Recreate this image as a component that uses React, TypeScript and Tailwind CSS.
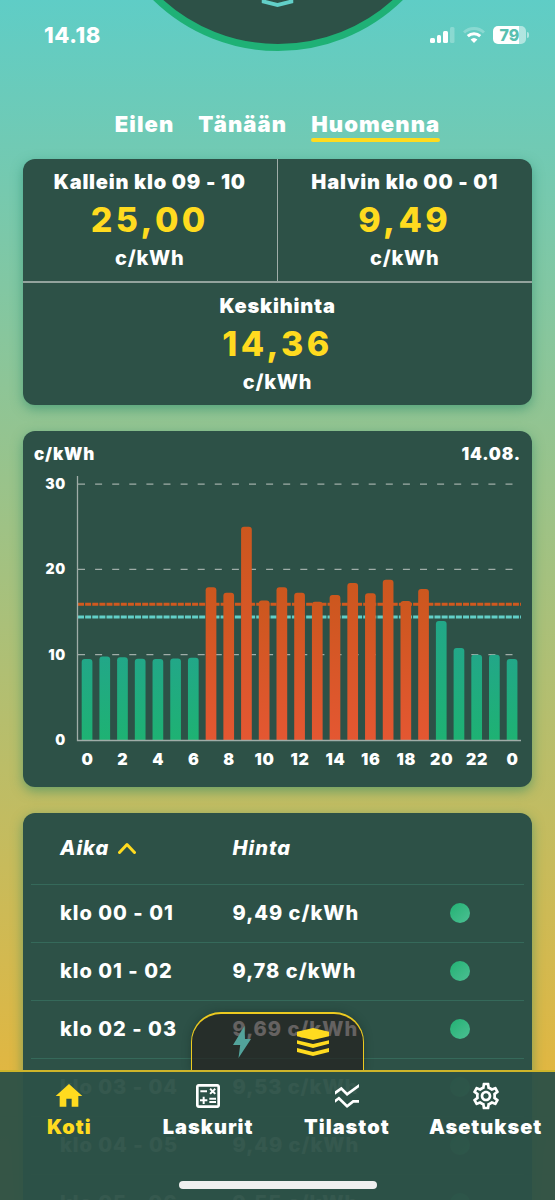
import React, { useState } from "react";
import { MdHome, MdOutlineCalculate, MdOutlineSettings, MdSsidChart } from "react-icons/md";

const DAYS = ["Eilen", "Tänään", "Huomenna"];

// c/kWh per hour, the last one is the first hour of the next day
const PRICES = [
    9.49, 9.78, 9.69, 9.53, 9.49, 9.55, 9.64, 17.9, 17.25, 25, 16.35, 17.9, 17.25,
    16.2, 17, 18.4, 17.2, 18.8, 16.3, 17.7, 13.95, 10.8, 10, 10, 9.49,
];

const AVERAGE = 14.36;
const LIMIT = 15.9;
const TABLE_ROWS = 6;

const NAV_ITEMS = [
    { label: "Koti", icon: MdHome },
    { label: "Laskurit", icon: MdOutlineCalculate },
    { label: "Tilastot", icon: MdSsidChart },
    { label: "Asetukset", icon: MdOutlineSettings },
];

const pad = (n: number) => String(n).padStart(2, "0");
const formatPrice = (n: number) => n.toFixed(2).replace(".", ",");

const StackShape = () => (
    <>
        <path d="M0 3.700 16 0l16 3.700v4.600L16 12 0 8.300z" />
        <path d="M0 12.300 16 16l16-3.700v3.400L16 20 0 15.700z" />
        <path d="M0 20 16 24l16-4v4L16 28 0 24z" />
    </>
);

const StatusBar = () => (
    <header className="relative flex h-[110px] items-start justify-between pt-[21px] pr-[26px] pl-11">
        <div className="absolute top-[-306px] left-1/2 size-[357px] -translate-x-1/2 rounded-full border-[7px] border-[#1fb176] bg-[#2d5147]">
            <svg viewBox="0 0 32 28" className="absolute bottom-[37px] left-1/2 h-7 w-8 -translate-x-1/2" fill="#62cfc8">
                <StackShape />
            </svg>
        </div>
        <span className="text-[22px] leading-7 font-extrabold tracking-wide">14.18</span>
        <div className="flex items-center gap-2 pt-[5px]">
            <svg viewBox="0 0 25 18" className="h-[18px] w-[25px]" fill="#fff">
                <rect x="0" y="12" width="5" height="5" rx="1.500" />
                <rect x="7" y="9" width="4" height="8" rx="1.500" />
                <rect x="13" y="5" width="5" height="12" rx="1.500" />
                <rect x="20" y="1" width="4.500" height="16" rx="1.500" opacity="0.250" />
            </svg>
            <svg viewBox="0 0 22 18" className="h-[18px] w-[22px]" fill="none" stroke="#fff" strokeWidth="3">
                <path d="M1 6.500a14.500 14.500 0 0 1 20 0" opacity="0.250" />
                <path d="M4.800 10.200a9 9 0 0 1 12.400 0" />
                <path d="M7.600 13.600a5 5 0 0 1 6.800 0L11 17z" fill="#fff" stroke="none" />
            </svg>
            <div className="flex items-center gap-px">
                <div className="flex h-[18px] w-[33px] justify-center rounded-[5px] bg-linear-to-r from-white from-79% to-white/50 to-79%">
                    <span className="text-base leading-[18px] font-extrabold text-[#58bfb0]">79</span>
                </div>
                <div className="h-[6px] w-[2px] rounded-r-full bg-white/50" />
            </div>
        </div>
    </header>
);

const PriceBox = ({ title, value, className = "" }: { title: string; value: number; className?: string }) => (
    <div className={`py-[9px] text-center font-black tracking-wider ${className}`}>
        <div className="text-xl leading-7">{title}</div>
        <div className="text-[34px] leading-[48px] font-extrabold tracking-widest text-[#ffdb1f]">{formatPrice(value)}</div>
        <div className="text-xl leading-7 font-extrabold">c/kWh</div>
    </div>
);

const PriceChart = () => {
    const baseY = 272;
    const toY = (value: number) => baseY - value * 8.53;

    return (
        <section className="overflow-hidden rounded-xl bg-[#2d5147] pt-[9px] shadow-[0_4px_12px_rgba(25,130,100,0.5)]">
            <div className="flex justify-between px-[11px] text-[17px] leading-7 font-black tracking-wider">
                <span>c/kWh</span>
                <span>14.08.</span>
            </div>
            <svg viewBox="0 0 509 319" className="block w-full" fill="#fff">
                <defs>
                    <linearGradient id="cheap" x1="0" y1="0" x2="0" y2="1">
                        <stop offset="0" stopColor="#22a788" />
                        <stop offset="1" stopColor="#1eb273" />
                    </linearGradient>
                    <linearGradient id="expensive" x1="0" y1="0" x2="0" y2="1">
                        <stop offset="0" stopColor="#cc571e" />
                        <stop offset="1" stopColor="#e45732" />
                    </linearGradient>
                </defs>
                {[10, 20, 30].map((tick) => (
                    <line key={tick} x1="55" x2="490" y1={toY(tick)} y2={toY(tick)} stroke="#9fada8" strokeWidth="1.300" strokeDasharray="7 10.100" />
                ))}
                <line x1="55" x2="498" y1={toY(LIMIT)} y2={toY(LIMIT)} stroke="#d0591f" strokeWidth="3" strokeDasharray="6 1.130" />
                <line x1="55" x2="498" y1={toY(AVERAGE + 0.06)} y2={toY(AVERAGE + 0.06)} stroke="#62cfc8" strokeWidth="3" strokeDasharray="6 1.130" />
                {PRICES.map((price, hour) => {
                    const x = 58.7 + hour * 17.71;
                    const y = toY(price);
                    return (
                        <path
                            key={hour}
                            d={`M${x} ${baseY}V${y + 3}q0-3 3-3h4.700q3 0 3 3V${baseY}z`}
                            fill={price > LIMIT ? "url(#expensive)" : "url(#cheap)"}
                        />
                    );
                })}
                <path d={`M54.500 8V${baseY + 0.5}H498`} fill="none" stroke="#9fada8" strokeWidth="1.300" />
                {[0, 10, 20, 30].map((tick) => (
                    <text key={tick} x="43" y={toY(tick) + 5} textAnchor="end" className="text-sm font-black tracking-wider">
                        {tick}
                    </text>
                ))}
                {PRICES.map((_, hour) =>
                    hour % 2 === 0 ? (
                        <text key={hour} x={64.5 + hour * 17.71} y="297" textAnchor="middle" className="text-base font-black tracking-wider">
                            {hour % 24}
                        </text>
                    ) : null
                )}
            </svg>
        </section>
    );
};

const PriceTable = () => (
    <section className="rounded-xl bg-[#2d5147] px-2 shadow-[0_4px_12px_rgba(25,130,100,0.5)]">
        <table className="w-full table-fixed text-xl leading-7 font-extrabold tracking-wider">
            <thead>
                <tr className="h-[71px] border-b border-[#35695a] text-left italic">
                    <th className="w-[35%] pl-[29px] font-extrabold">
                        <button className="flex items-center gap-[9px]">
                            Aika
                            <svg viewBox="0 0 18 12" className="h-3 w-[18px]" fill="none" stroke="#ffdb1f" strokeWidth="3" strokeLinecap="round" strokeLinejoin="round">
                                <path d="M1.500 10.500 9 2.500l7.500 8" />
                            </svg>
                        </button>
                    </th>
                    <th className="w-[39%] pl-[29px] font-extrabold">Hinta</th>
                    <th className="w-[26%]" aria-label="Taso" />
                </tr>
            </thead>
            <tbody>
                {PRICES.slice(0, TABLE_ROWS).map((price, hour) => (
                    <tr key={hour} className="h-[58px] border-b border-[#35695a]">
                        <td className="pl-[29px]">klo {pad(hour)} - {pad(hour + 1)}</td>
                        <td className="pl-[29px]">{formatPrice(price)} c/kWh</td>
                        <td>
                            <div
                                className={`mx-auto size-5 rounded-full bg-linear-to-br ${
                                    price > LIMIT ? "from-[#cc571e] to-[#e45732]" : "from-[#1eb273] to-[#4bbf93]"
                                }`}
                            />
                        </td>
                    </tr>
                ))}
            </tbody>
        </table>
    </section>
);

const BottomNav = () => (
    <div className="absolute inset-x-0 bottom-0">
        <div className="mx-auto grid h-[58px] w-[173px] grid-cols-2 items-center justify-items-center rounded-t-[30px] border-x border-t-2 border-[#ecca20] bg-[#231f1e]/70 px-[14px] shadow-[0_0_8px_rgba(20,40,35,0.4)]">
            <button aria-label="Sähkö">
                <svg viewBox="0 0 18 32" className="h-8 w-[18px]" fill="#52a39b">
                    <path d="M11.500 0 0 19h7.200L5.500 32 18 13h-6z" />
                </svg>
            </button>
            <button aria-label="Kerrokset">
                <svg viewBox="0 0 32 28" className="h-7 w-8" fill="#ffdb1f">
                    <StackShape />
                </svg>
            </button>
        </div>
        <nav className="h-[130px] border-t-2 border-[#ceb52a] bg-[#2d5147]/96 pt-2">
            <div className="grid grid-cols-4">
                {NAV_ITEMS.map(({ label, icon: Icon }, i) => (
                    <a
                        key={label}
                        href="#"
                        className={`flex flex-col items-center text-xl leading-[30px] font-black tracking-wider ${i === 0 ? "text-[#ffdb1f]" : "text-white"}`}
                    >
                        <Icon className="size-8" />
                        {label}
                    </a>
                ))}
            </div>
            <div className="mx-auto mt-[39px] h-2 w-[198px] rounded-full bg-[#efefef]" />
        </nav>
    </div>
);

export default function App() {
    const [day, setDay] = useState("Huomenna");

    return (
        <div className="relative h-screen overflow-hidden bg-linear-to-b/srgb from-[#5fcdc6] to-[#f0b432] font-['Inter',sans-serif] text-white">
            <div className="h-full overflow-y-auto [scrollbar-width:none]">
                <StatusBar />
                <div className="flex justify-center gap-6">
                    {DAYS.map((name) => (
                        <button
                            key={name}
                            onClick={() => setDay(name)}
                            className={`text-[22px] leading-7 font-black tracking-wider ${day === name ? "after:block after:h-1 after:rounded-full after:bg-[#ffdb1f]" : "pb-1"}`}
                        >
                            {name}
                        </button>
                    ))}
                </div>
                <main className="flex flex-col gap-[26px] px-[23px] pt-[17px] pb-40">
                    <section className="grid grid-cols-2 rounded-xl bg-[#2d5147] shadow-[0_4px_12px_rgba(25,130,100,0.5)]">
                        <PriceBox title="Kallein klo 09 - 10" value={25} className="border-r border-[#9fada8]" />
                        <PriceBox title="Halvin klo 00 - 01" value={9.49} />
                        <PriceBox title="Keskihinta" value={AVERAGE} className="col-span-2 border-t-2 border-[#93a39d]" />
                    </section>
                    <PriceChart />
                    <PriceTable />
                </main>
            </div>
            <BottomNav />
        </div>
    );
}
